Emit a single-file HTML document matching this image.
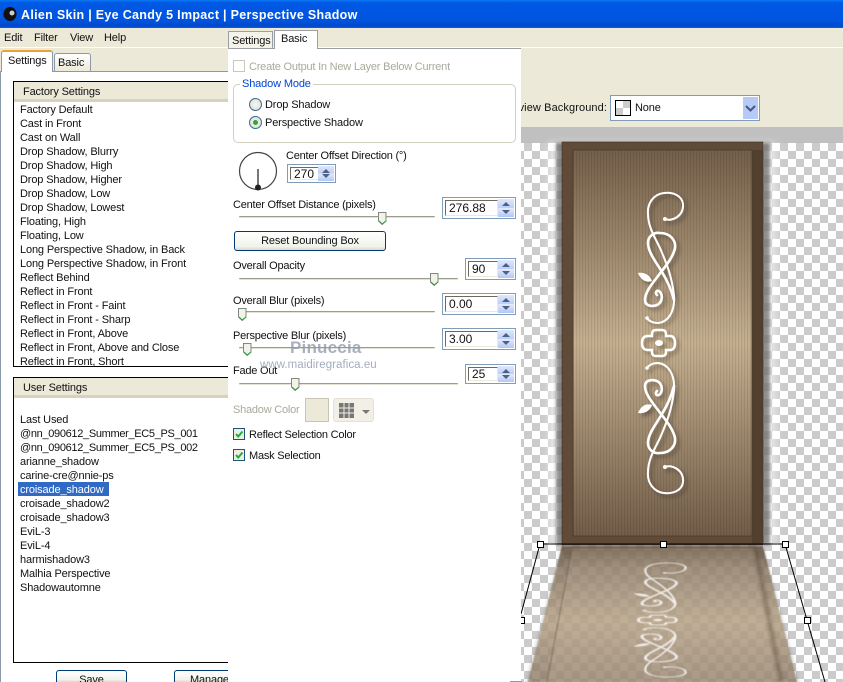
<!DOCTYPE html>
<html style="width:843px;height:682px;overflow:hidden"><head><meta charset="utf-8"><style>
html,body{margin:0;padding:0;background:#ece9d8}
body{width:843px;height:682px;position:relative;overflow:hidden;font:11px/14px "Liberation Sans",sans-serif;color:#111;letter-spacing:-.14px}
div,span.t{position:absolute}
.t{white-space:nowrap;line-height:14px;margin-top:1px}
.m{letter-spacing:-.22px}
.g{color:#a9a99c}
.sp{background:#fff;border:1px solid #7f9db9;box-sizing:border-box}
.in{position:absolute;left:2px;top:2px;bottom:2px;border-top:1px solid #6f6a5c;border-left:1px solid #6f6a5c;border-right:1px solid #ece9d8;border-bottom:1px solid #ece9d8;padding-left:3px;font-size:12px;line-height:13px;box-sizing:border-box;letter-spacing:0}
.btn{position:absolute;right:1px;top:1px;bottom:1px;width:16px;background:linear-gradient(#dfe8fc,#bccdf8 50%,#e4ebfc 50%,#b4c7f6)}
.btn:before{content:"";position:absolute;left:4px;top:3px;border:4px solid transparent;border-top:0;border-bottom:4px solid #4d6185}
.btn:after{content:"";position:absolute;left:4px;bottom:3px;border:4px solid transparent;border-bottom:0;border-top:4px solid #4d6185}
.tr{height:1px;background:#9c9c8e;border-bottom:1px solid #e4e2d4;border-radius:1px}
.cb{width:12px;height:12px;box-sizing:border-box;border:1px solid #1c5180;background:#eeeee6}
.rb{width:13px;height:13px;box-sizing:border-box;border:1px solid #3f6a92;border-radius:50%;background:radial-gradient(circle,#f8f8f4,#d8d8d0)}
.hd{background:#ece9d8;border-bottom:3px solid #d8d2bd;box-sizing:border-box}
.b{box-sizing:border-box;border:1px solid #003c74;border-radius:3px;background:linear-gradient(#fff,#f3f3ec 80%,#dcd8c8);text-align:center}
</style></head><body>

<svg width="843" height="682" viewBox="0 0 843 682" style="position:absolute;left:0;top:0">
<defs>
<pattern id="ck" x="524" y="143" width="16" height="16" patternUnits="userSpaceOnUse"><rect width="16" height="16" fill="#fff"/><rect width="8" height="8" fill="#cbcbcb"/><rect x="8" y="8" width="8" height="8" fill="#cbcbcb"/></pattern>
<pattern id="st" x="0" y="0" width="3" height="4" patternUnits="userSpaceOnUse"><rect width="1.2" height="4" fill="#3a2a18" opacity=".11"/><rect x="1.5" width="1" height="4" fill="#fff" opacity=".05"/></pattern>
<linearGradient id="in" x1="0" y1="0" x2="0" y2="1"><stop offset="0" stop-color="#705b46"/><stop offset=".5" stop-color="#c4ae8e"/><stop offset="1" stop-color="#6e5945"/></linearGradient>
<linearGradient id="rf" x1="0" y1="0" x2="0" y2="1"><stop offset="0" stop-color="#5d4835" stop-opacity=".82"/><stop offset=".18" stop-color="#857159" stop-opacity=".72"/><stop offset=".55" stop-color="#b9a282" stop-opacity=".74"/><stop offset="1" stop-color="#8d7860" stop-opacity=".7"/></linearGradient>
<filter id="bl" x="-20%" y="-20%" width="140%" height="140%"><feGaussianBlur stdDeviation="4"/></filter>
<filter id="bs" x="-20%" y="-20%" width="140%" height="140%"><feGaussianBlur stdDeviation="1.5"/></filter>
<filter id="bt" x="-20%" y="-20%" width="140%" height="140%"><feGaussianBlur stdDeviation=".5"/></filter>
<filter id="ds" x="-30%" y="-10%" width="160%" height="120%"><feGaussianBlur in="SourceAlpha" stdDeviation="2"/><feOffset dx="3" dy="3"/><feComponentTransfer><feFuncA type="linear" slope=".35"/></feComponentTransfer><feMerge><feMergeNode/><feMergeNode in="SourceGraphic"/></feMerge></filter>
<g id="half" fill="none" stroke="#fff" stroke-linecap="round">
<path stroke-width="2" d="M665 219C672 222 684 216 683 204C682 195 672 192 664 193C654 194 647 203 648 214C648 226 654 236 660 248C666 262 672 276 674 296C675 312 668 322 658 323C652 323 648 320 647 318"/>
<path stroke-width="2.6" d="M648 243C648 236 654 232 660 233C670 233 676 240 675 248C673 258 664 268 658 276C652 284 645 292 645 300C645 306 652 307 657 305C663 302 663 294 659 291C656 290 655 293 657 295"/>
<path stroke-width="2.6" d="M648 243C648 252 656 262 662 272C668 282 672 292 674 300"/>
<path fill="#fff" stroke="none" d="M638 273C644 272 650 275 652 281C646 283 641 280 638 273Z"/>
<circle cx="665" cy="219" r="2" fill="#fff" stroke="none"/>
<circle cx="647" cy="318" r="1.8" fill="#fff" stroke="none"/>
</g>
<g id="orn">
<use href="#half"/>
<use href="#half" transform="matrix(1 0 0 -1 0 686)"/>
<path fill="none" stroke="#fff" stroke-width="2.4" d="M652 336v-2q0-4 4-4h6q4 0 4 4v2h4q5 0 5 7q0 7-5 7h-4v2q0 4-4 4h-6q-4 0-4-4v-2h-4q-6 0-6-7q0-7 6-7z"/>
<ellipse cx="659" cy="343" rx="4" ry="3" fill="#fff"/>
</g>
</defs>
<rect x="516" y="143" width="327" height="539" fill="url(#ck)"/>
<rect x="521" y="127" width="322" height="16" fill="#c0c0c0"/>
<rect x="549" y="143" width="227" height="402" fill="#fff" opacity=".55" filter="url(#bl)"/>
<rect x="556" y="143" width="214" height="402" fill="#222" opacity=".5" filter="url(#bs)"/>
<rect x="562" y="142" width="201" height="403" fill="#604b38" stroke="#3d2e20" stroke-width=".6"/>
<rect x="752" y="150" width="11" height="395" fill="#4a3929" opacity=".6"/>
<rect x="573" y="150" width="179" height="386" fill="url(#in)" stroke="#4b3a2a" stroke-width=".8"/>
<rect x="573" y="150" width="179" height="386" fill="url(#st)"/>
<g filter="url(#ds)"><use href="#orn"/></g>
<polygon points="562,546 763,546 801,690 524,690" fill="#777" opacity=".35" filter="url(#bs)"/>
<polygon points="562,546 763,546 797,682 528,682" fill="url(#rf)" filter="url(#bt)"/>
<polygon points="572,548 754,548 780,682 547,682" fill="#c9b79f" opacity=".2" filter="url(#bt)"/>
<path d="M572 548L547 682" stroke="#6d5a47" stroke-width="1.5" opacity=".45" fill="none" filter="url(#bt)"/>
<path d="M755 548L781 682" stroke="#5d4c3b" stroke-width="5" opacity=".4" fill="none" filter="url(#bs)"/>
<g filter="url(#bt)" opacity=".8"><use href="#orn" transform="translate(658 620) scale(1.15 .38) translate(-659 -343)"/></g>
<g fill="none" stroke="#000" stroke-width="1">
<path d="M540 544H785M785 544L807 620L825 682M540 544L521 614"/>
</g>
<g fill="#fff" stroke="#000">
<rect x="537.5" y="541.5" width="6" height="6"/><rect x="660.5" y="541.5" width="6" height="6"/><rect x="782.5" y="541.5" width="6" height="6"/><rect x="518.5" y="617.5" width="6" height="6"/><rect x="804.5" y="617.5" width="6" height="6"/>
</g>
</svg>

<div style="left:0;top:0;width:843px;height:28px;background:linear-gradient(#0a78f2 0,#0058e4 3px,#0055e0 20px,#0048cc 26px,#0a5fe0 28px)"></div>
<svg width="18" height="18" style="position:absolute;left:1px;top:5px" viewBox="0 0 18 18"><ellipse cx="9" cy="9" rx="6.5" ry="7" fill="#111"/><ellipse cx="11" cy="8" rx="2.5" ry="2.5" fill="#ccc"/></svg>
<span class="t" style="left:21px;top:7px;color:#fff;font-size:12.5px;font-weight:bold;letter-spacing:.3px">Alien Skin | Eye Candy 5 Impact | Perspective Shadow</span>
<span class="t" style="left:4px;top:30px">Edit</span><span class="t" style="left:34px;top:30px">Filter</span><span class="t" style="left:70px;top:30px">View</span><span class="t" style="left:104px;top:30px">Help</span>
<div style="left:0;top:47px;width:843px;height:1px;background:#fff"></div>

<span class="t" style="right:236px;top:100px;letter-spacing:.1px">Preview Background:</span>
<div style="left:610px;top:95px;width:150px;height:26px;background:#fff;border:1px solid #7f9db9;box-sizing:border-box"></div>
<div style="left:615px;top:100px;width:16px;height:16px;border:1px solid #000;box-sizing:border-box;background:conic-gradient(#ccc 25%,#fff 25% 50%,#ccc 50% 75%,#fff 75%)"></div>
<span class="t" style="left:635px;top:100px">None</span>
<div style="left:743px;top:97px;width:15px;height:22px;background:#b7caf7"><svg width="15" height="22"><path d="M3 9l4.5 4.5L12 9" fill="none" stroke="#42567e" stroke-width="2"/></svg></div>

<!-- left panel -->
<div style="left:0;top:71px;width:228px;height:611px;background:#fff;border-left:1px solid #8c9aa8;box-sizing:border-box"></div>
<div style="left:54px;top:53px;width:37px;height:18px;background:linear-gradient(#fff,#ece9d8);border:1px solid #8c9aa8;border-bottom:0;border-radius:3px 3px 0 0;box-sizing:border-box"></div>
<span class="t" style="left:58px;top:55px">Basic</span>
<div style="left:0;top:71px;width:228px;height:1px;background:#8c9aa8"></div>
<div style="left:1px;top:50px;width:52px;height:22px;background:#fff;border:1px solid #8c9aa8;border-bottom:0;border-top:2px solid #f0a030;border-radius:3px 3px 0 0;box-sizing:border-box"></div>
<span class="t" style="left:8px;top:53px">Settings</span>

<div style="left:13px;top:81px;width:215px;height:286px;border:1px solid #000;border-right:0;box-sizing:border-box;background:#fff"></div>
<div class="hd" style="left:14px;top:82px;width:214px;height:20px"></div>
<span class="t" style="left:23px;top:84px">Factory Settings</span>
<div style="left:20px;top:103px;width:207px;height:263px;overflow:hidden;line-height:14px">Factory Default<br>Cast in Front<br>Cast on Wall<br>Drop Shadow, Blurry<br>Drop Shadow, High<br>Drop Shadow, Higher<br>Drop Shadow, Low<br>Drop Shadow, Lowest<br>Floating, High<br>Floating, Low<br>Long Perspective Shadow, in Back<br>Long Perspective Shadow, in Front<br>Reflect Behind<br>Reflect in Front<br>Reflect in Front - Faint<br>Reflect in Front - Sharp<br>Reflect in Front, Above<br>Reflect in Front, Above and Close<br>Reflect in Front, Short</div>

<div style="left:13px;top:377px;width:215px;height:286px;border:1px solid #000;border-right:0;box-sizing:border-box;background:#fff"></div>
<div class="hd" style="left:14px;top:378px;width:214px;height:20px"></div>
<span class="t" style="left:23px;top:380px">User Settings</span>
<div style="left:18px;top:482px;width:91px;height:14px;background:#316ac5"></div>
<div style="left:20px;top:413px;width:207px;height:190px;line-height:14px;white-space:nowrap">Last Used<br><span style="letter-spacing:-.32px">@nn_090612_Summer_EC5_PS_001</span><br><span style="letter-spacing:-.32px">@nn_090612_Summer_EC5_PS_002</span><br>arianne_shadow<br>carine-cre@nnie-ps<br><span style="color:#fff">croisade_shadow</span><br>croisade_shadow2<br>croisade_shadow3<br>EviL-3<br>EviL-4<br>harmishadow3<br>Malhia Perspective<br>Shadowautomne</div>
<div class="b" style="left:56px;top:670px;width:71px;height:12px;line-height:18px;border-bottom:0;border-radius:3px 3px 0 0;overflow:hidden">Save</div>
<div class="b" style="left:174px;top:670px;width:54px;height:12px;line-height:18px;text-align:left;padding-left:15px;border-bottom:0;border-right:0;border-radius:3px 0 0 0;overflow:hidden">Manage</div>

<!-- middle panel -->
<div style="left:228px;top:31px;width:45px;height:17px;background:#f4f3ea;border:1px solid #9aa0a6;border-bottom:0;box-sizing:border-box"></div>
<span class="t" style="left:232px;top:33px">Settings</span>
<div style="left:228px;top:48px;width:293px;height:634px;background:#fff"></div>
<div style="left:228px;top:48px;width:293px;height:1px;background:#9aa0a6"></div>
<div style="left:274px;top:30px;width:44px;height:19px;background:#fff;border:1px solid #9aa0a6;border-bottom:0;box-sizing:border-box"></div>
<span class="t" style="left:281px;top:31px">Basic</span>
<div style="left:510px;top:681px;width:12px;height:1px;background:#999"></div>

<div style="left:233px;top:60px;width:12px;height:12px;border:1px solid #c6c6ba;box-sizing:border-box"></div>
<span class="t g m" style="left:249px;top:59px">Create Output In New Layer Below Current</span>
<div style="left:233px;top:84px;width:283px;height:59px;border:1px solid #d0d0bf;border-radius:5px;box-sizing:border-box"></div>
<span class="t" style="left:240px;top:76px;background:#fff;color:#0046d5;padding:0 2px">Shadow Mode</span>
<div class="rb" style="left:249px;top:98px"></div>
<div class="rb" style="left:249px;top:116px"></div>
<div style="left:253px;top:120px;width:5px;height:5px;border-radius:50%;background:#2aa83a"></div>
<span class="t" style="left:265px;top:97px">Drop Shadow</span>
<span class="t" style="left:265px;top:115px">Perspective Shadow</span>

<svg width="44" height="44" style="position:absolute;left:236px;top:150px"><circle cx="22" cy="21" r="18.5" fill="none" stroke="#444" stroke-width="1.2"/><path d="M22 19V36" stroke="#555" stroke-width="1.6"/><circle cx="22" cy="37.5" r="3" fill="#222"/></svg>
<span class="t m" style="left:286px;top:148px">Center Offset Direction (°)</span>
<div class="sp" style="left:287px;top:164px;width:49px;height:19px"><div class="in" style="width:30px">270</div><div class="btn"></div></div>

<span class="t m" style="left:233px;top:197px">Center Offset Distance (pixels)</span>
<div class="tr" style="left:239px;top:216px;width:196px"></div>
<svg width="9" height="13" style="position:absolute;left:378px;top:212px"><path d="M.5 .5H8V9L4.2 12.5L.5 9Z" fill="#f2f2ea" stroke="#7d8a7d"/><path d="M1 9L4.2 12L8 9" fill="none" stroke="#2f9a3f"/></svg>
<div class="sp" style="left:442px;top:197px;width:74px;height:22px"><div class="in" style="width:53px;line-height:15px">276.88</div><div class="btn"></div></div>
<div class="b" style="left:234px;top:231px;width:152px;height:20px;line-height:19px">Reset Bounding Box</div>

<span class="t m" style="left:233px;top:258px">Overall Opacity</span>
<div class="tr" style="left:239px;top:278px;width:219px"></div>
<svg width="9" height="13" style="position:absolute;left:430px;top:273px"><path d="M.5 .5H8V9L4.2 12.5L.5 9Z" fill="#f2f2ea" stroke="#7d8a7d"/><path d="M1 9L4.2 12L8 9" fill="none" stroke="#2f9a3f"/></svg>
<div class="sp" style="left:465px;top:258px;width:51px;height:22px"><div class="in" style="width:30px;line-height:15px">90</div><div class="btn"></div></div>

<span class="t m" style="left:233px;top:293px">Overall Blur (pixels)</span>
<div class="tr" style="left:239px;top:311px;width:196px"></div>
<svg width="9" height="13" style="position:absolute;left:238px;top:308px"><path d="M.5 .5H8V9L4.2 12.5L.5 9Z" fill="#f2f2ea" stroke="#7d8a7d"/><path d="M1 9L4.2 12L8 9" fill="none" stroke="#2f9a3f"/></svg>
<div class="sp" style="left:442px;top:293px;width:74px;height:22px"><div class="in" style="width:53px;line-height:15px">0.00</div><div class="btn"></div></div>

<span class="t m" style="left:233px;top:328px">Perspective Blur (pixels)</span>
<div class="tr" style="left:239px;top:347px;width:196px"></div>
<svg width="9" height="13" style="position:absolute;left:243px;top:343px"><path d="M.5 .5H8V9L4.2 12.5L.5 9Z" fill="#f2f2ea" stroke="#7d8a7d"/><path d="M1 9L4.2 12L8 9" fill="none" stroke="#2f9a3f"/></svg>
<div class="sp" style="left:442px;top:328px;width:74px;height:22px"><div class="in" style="width:53px;line-height:15px">3.00</div><div class="btn"></div></div>

<span class="t m" style="left:233px;top:363px">Fade Out</span>
<div class="tr" style="left:239px;top:383px;width:219px"></div>
<svg width="9" height="13" style="position:absolute;left:291px;top:378px"><path d="M.5 .5H8V9L4.2 12.5L.5 9Z" fill="#f2f2ea" stroke="#7d8a7d"/><path d="M1 9L4.2 12L8 9" fill="none" stroke="#2f9a3f"/></svg>
<div class="sp" style="left:465px;top:364px;width:51px;height:20px"><div class="in" style="width:30px">25</div><div class="btn"></div></div>

<span class="t" style="left:290px;top:337px;font-size:17px;font-weight:bold;color:#8d98ad;opacity:.75;letter-spacing:.2px;line-height:20px">Pinuccia</span>
<span class="t" style="left:260px;top:357px;font-size:11.5px;color:#8d98ad;opacity:.8;letter-spacing:.05px">www.maidiregrafica.eu</span>

<span class="t g m" style="left:233px;top:402px">Shadow Color</span>
<div style="left:305px;top:398px;width:24px;height:24px;background:#ece9d8;border:1px solid #c8c5b2;box-sizing:border-box"></div>
<div style="left:333px;top:398px;width:41px;height:24px;background:#f2f0e6;border:1px solid #e4e1d0;border-radius:3px;box-sizing:border-box"></div>
<svg width="36" height="16" style="position:absolute;left:338px;top:403px"><rect x="1" y="0" width="15" height="15" fill="#777"/><path d="M6 0V15M11 0V15M1 5H16M1 10H16" stroke="#f2f0e6"/><path d="M24 7H32L28 11Z" fill="#777"/></svg>

<div class="cb" style="left:233px;top:428px"></div>
<svg width="12" height="12" style="position:absolute;left:233px;top:428px"><path d="M3 6L5.2 8.5L9.5 3.5" fill="none" stroke="#22b030" stroke-width="2"/></svg>
<span class="t m" style="left:249px;top:427px">Reflect Selection Color</span>
<div class="cb" style="left:233px;top:449px"></div>
<svg width="12" height="12" style="position:absolute;left:233px;top:449px"><path d="M3 6L5.2 8.5L9.5 3.5" fill="none" stroke="#22b030" stroke-width="2"/></svg>
<span class="t m" style="left:249px;top:448px">Mask Selection</span>
</body></html>
